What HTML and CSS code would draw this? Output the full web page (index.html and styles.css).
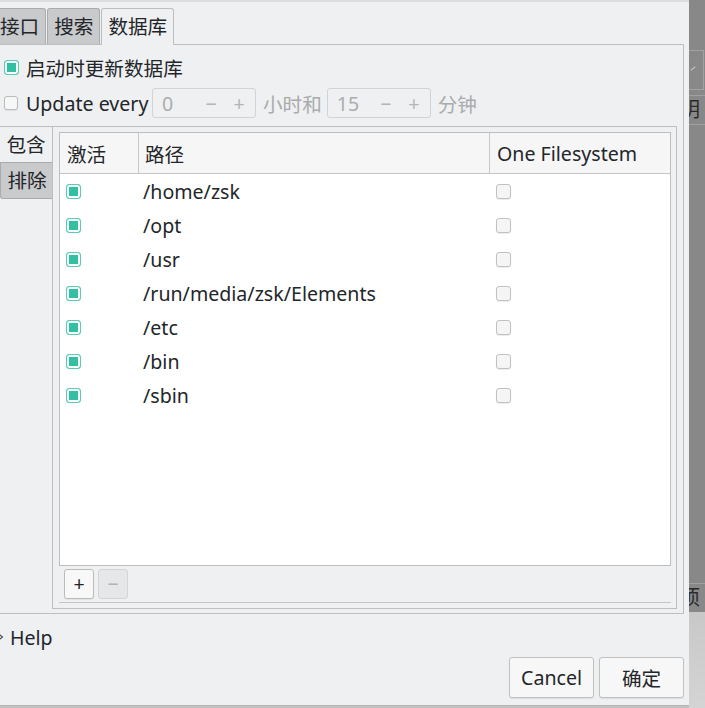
FILE: index.html
```html
<!DOCTYPE html>
<html>
<head>
<meta charset="utf-8">
<link rel="stylesheet" href="styles.css">
</head>
<body>
<div class="screen">
  <div class="dialog">
    <div class="tabbar">
      <div class="tab">接口</div>
      <div class="tab">搜索</div>
      <div class="tab active">数据库</div>
    </div>
    <div class="panel">
      <div class="row">
        <span class="cb on"></span><span>启动时更新数据库</span>
      </div>
      <div class="row row2">
        <span class="cb"></span><span class="upd">Update every</span>
        <div class="spin"><span class="val">0</span><span class="op">−</span><span class="op">+</span></div>
        <span class="dis">小时和</span>
        <div class="spin"><span class="val">15</span><span class="op">−</span><span class="op">+</span></div>
        <span class="dis">分钟</span>
      </div>
      <div class="side">
        <div class="sidetabs">
          <div class="stab">包含</div>
          <div class="stab off">排除</div>
        </div>
        <div class="sideframe">
          <div class="table">
            <div class="thead">
              <div class="th c1">激活</div>
              <div class="th c2">路径</div>
              <div class="th c3">One Filesystem</div>
            </div>
            <div class="tr"><div class="td1"><span class="cb on"></span></div><div class="td2">/home/zsk</div><div class="td3"><span class="cb box"></span></div></div>
            <div class="tr"><div class="td1"><span class="cb on"></span></div><div class="td2">/opt</div><div class="td3"><span class="cb box"></span></div></div>
            <div class="tr"><div class="td1"><span class="cb on"></span></div><div class="td2">/usr</div><div class="td3"><span class="cb box"></span></div></div>
            <div class="tr"><div class="td1"><span class="cb on"></span></div><div class="td2">/run/media/zsk/Elements</div><div class="td3"><span class="cb box"></span></div></div>
            <div class="tr"><div class="td1"><span class="cb on"></span></div><div class="td2">/etc</div><div class="td3"><span class="cb box"></span></div></div>
            <div class="tr"><div class="td1"><span class="cb on"></span></div><div class="td2">/bin</div><div class="td3"><span class="cb box"></span></div></div>
            <div class="tr"><div class="td1"><span class="cb on"></span></div><div class="td2">/sbin</div><div class="td3"><span class="cb box"></span></div></div>
          </div>
          <div class="tools">
            <div class="tbtn">+</div>
            <div class="tbtn disabled">−</div>
          </div>
          <div class="hline"></div>
        </div>
      </div>
    </div>
    <div class="help">
      <svg class="arrow" width="10" height="12" viewBox="0 0 10 12"><path d="M0.5 1 L6.5 6 L0.5 11" fill="none" stroke="#4d4f52" stroke-width="1.2"/></svg>
      <span>Help</span>
    </div>
    <div class="btns">
      <div class="btn">Cancel</div>
      <div class="btn">确定</div>
    </div>
  </div>
  <div class="desk">
    <div class="dbox"><span class="dcheck"></span></div>
    <div class="dline d1"></div>
    <div class="dtext t1">明</div>
    <div class="dline d2"></div>
    <div class="dspacer"></div>
    <div class="dline d3"></div>
    <div class="dtext t2">项</div>
  </div>
</div>
</body>
</html>
```

FILE: styles.css
```css
html, body {
  margin: 0;
  padding: 0;
}
body {
  width: 705px;
  height: 708px;
  overflow: hidden;
  background: #c2c2c2;
  font-family: "Noto Sans", "Noto Sans CJK SC", sans-serif;
  font-size: 19.6px;
  color: #232629;
}
.screen {
  display: flex;
  height: 708px;
}
.dialog {
  width: 689px;
  height: 706px;
  box-sizing: border-box;
  border-top: 2px solid #dcdde0;
  border-bottom: 1px solid #b4b5b6;
  background: #eff0f1;
  display: flex;
  flex-direction: column;
  overflow: hidden;
}
.tabbar {
  display: flex;
  align-items: flex-end;
  height: 42px;
  margin-left: -7px;
  flex: none;
}
.tab {
  height: 36px;
  box-sizing: border-box;
  padding: 0 6px;
  border: 1px solid #a9abad;
  border-bottom: none;
  border-radius: 3px 3px 0 0;
  background: #c9cacc;
  display: flex;
  align-items: center;
  line-height: 1;
  margin-right: 1px;
}
.tab.active {
  background: #eff0f1;
  border-color: #bcbebf;
  height: 37px;
  margin-bottom: -1px;
  margin-right: 0;
  position: relative;
  z-index: 1;
}
.panel {
  flex: none;
  margin-left: -1px;
  width: 685px;
  height: 570px;
  box-sizing: border-box;
  border: 1px solid #bcbebf;
  padding: 7px 6px 4px 0;
}
.row {
  display: flex;
  align-items: center;
  height: 30px;
  white-space: nowrap;
}
.row2 {
  margin-top: 6px;
}
.cb {
  display: inline-block;
  width: 14px;
  height: 14px;
  box-sizing: border-box;
  border-radius: 3px;
  border: 1px solid #b9bbbd;
  background: #f7f7f7;
  box-shadow: 0 1px 1px rgba(0, 0, 0, 0.08);
  flex: none;
}
.row .cb {
  margin: 0 8px 0 4px;
}
.cb.on {
  width: 15px;
  height: 15px;
  border: 1px solid #5fcab4;
  background: #33bfa2;
  box-shadow: inset 0 0 0 2px #f6fcfb;
}
.row .cb.on {
  width: 15px;
  height: 15px;
  margin-right: 7px;
}
.upd {
  width: 121px;
}
.spin {
  width: 104px;
  height: 30px;
  box-sizing: border-box;
  border: 1px solid #d2d3d4;
  border-radius: 3px;
  display: flex;
  align-items: center;
  color: #abacae;
  margin: 0 7px 0 5px;
}
.spin .val {
  flex: 1;
  padding-left: 9px;
}
.spin .op {
  width: 28px;
  text-align: center;
  color: #b4b5b7;
}
.spin .op:last-child {
  margin-right: 2px;
}
.dis {
  color: #a9aaac;
}
.side {
  margin-top: 8px;
  display: flex;
  height: 483px;
}
.sidetabs {
  width: 52px;
  flex: none;
}
.stab {
  height: 36px;
  box-sizing: border-box;
  border-top: 1px solid #bcbebf;
  display: flex;
  align-items: center;
  justify-content: center;
  line-height: 1;
}
.stab.off {
  height: 37px;
  background: #c9cacc;
  border: 1px solid #a9abad;
  border-right: none;
  border-radius: 0 0 0 3px;
  padding-left: 1px;
}
.sideframe {
  width: 625px;
  box-sizing: border-box;
  border: 1px solid #bcbebf;
  padding: 5px 5px 5px 6px;
  display: flex;
  flex-direction: column;
}
.table {
  height: 434px;
  box-sizing: border-box;
  border: 1px solid #bcbebf;
  background: #ffffff;
  flex: none;
}
.thead {
  display: flex;
  height: 41px;
  box-sizing: border-box;
  border-bottom: 1px solid #c4c5c6;
  background: #f6f6f6;
}
.th {
  display: flex;
  align-items: center;
  box-sizing: border-box;
  border-right: 1px solid #c8c9ca;
  padding-left: 7px;
}
.c1 { width: 79px; }
.c2 { width: 351px; padding-left: 6px; }
.c3 { flex: 1; border-right: none; }
.tr {
  display: flex;
  align-items: center;
  height: 34px;
}
.td1 {
  width: 79px;
  box-sizing: border-box;
  padding-left: 6px;
  display: flex;
}
.td2 {
  width: 351px;
  box-sizing: border-box;
  padding-left: 4px;
}
.td3 {
  padding-left: 6px;
  display: flex;
}
.cb.box {
  background: #f5f5f5;
  border-color: #bfc1c3;
  width: 15px;
  height: 15px;
}
.tools {
  display: flex;
  gap: 4px;
  margin-top: 3px;
  padding-left: 5px;
  height: 30px;
}
.tbtn {
  width: 30px;
  height: 30px;
  box-sizing: border-box;
  border: 1px solid #b9bbbd;
  border-radius: 3px;
  background: #f8f8f8;
  display: flex;
  align-items: center;
  justify-content: center;
  box-shadow: 0 1px 1px rgba(0, 0, 0, 0.06);
  line-height: 1;
}
.tbtn.disabled {
  background: #e6e7e8;
  border-color: #d3d4d5;
  color: #b3b4b6;
  box-shadow: none;
}
.hline {
  margin-top: 3px;
  height: 1px;
  background: #c4c5c6;
}
.help {
  margin-top: 10px;
  height: 26px;
  display: flex;
  align-items: center;
  flex: none;
}
.arrow {
  margin-left: -4px;
  margin-right: 4px;
}
.btns {
  display: flex;
  justify-content: flex-end;
  gap: 5px;
  margin-top: 7px;
  padding-right: 5px;
  flex: none;
}
.btn {
  width: 85px;
  height: 41px;
  box-sizing: border-box;
  border: 1px solid #c0c1c3;
  border-radius: 3px;
  background: #f7f7f7;
  display: flex;
  align-items: center;
  justify-content: center;
  box-shadow: 0 1px 1px rgba(0, 0, 0, 0.08);
}
.desk {
  width: 16px;
  height: 708px;
  overflow: hidden;
  background: linear-gradient(#888888 0, #888888 612px, #c8c8c8 612px, #d4d4d4 708px);
  display: flex;
  flex-direction: column;
  flex: none;
}
.dbox {
  margin-top: 50px;
  height: 40px;
  width: 15px;
  box-sizing: border-box;
  border: 1px solid #a2a2a2;
  border-left: none;
  position: relative;
}
.dcheck {
  position: absolute;
  left: 1px;
  top: 17px;
  width: 6px;
  height: 1px;
  background: #cfcfcf;
  transform: rotate(-40deg);
}
.dline {
  height: 1px;
  background: #a0a0a0;
  flex: none;
}
.d1 { margin-top: 5px; }
.dtext {
  height: 28px;
  line-height: 28px;
  color: #2b2b2b;
  margin-left: -9px;
  font-size: 20px;
}
.dspacer {
  height: 458px;
}
.t2 {
  height: 28px;
}
```
